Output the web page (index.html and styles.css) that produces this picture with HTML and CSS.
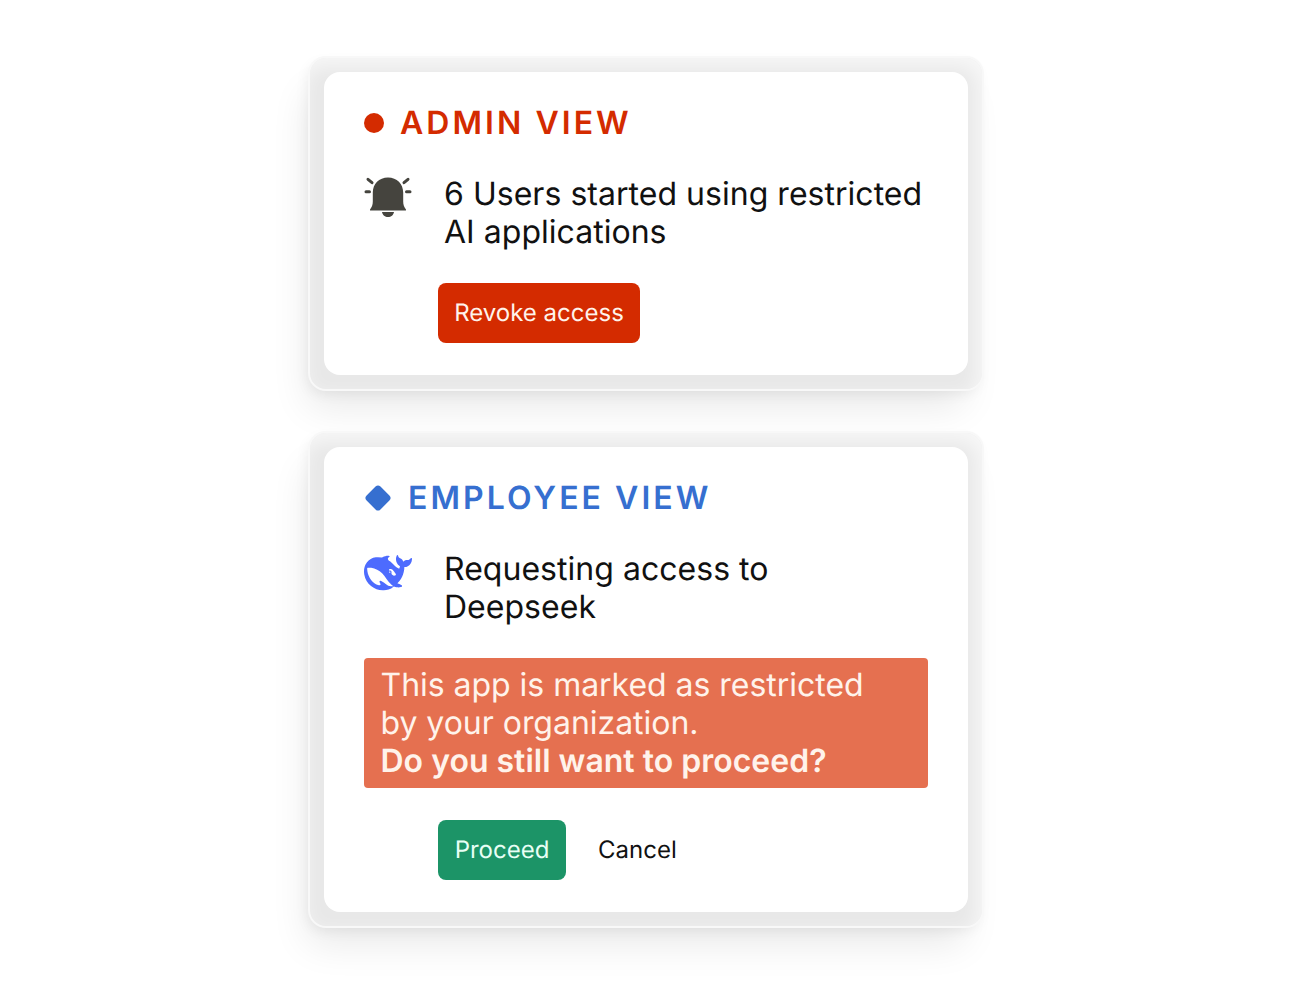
FILE: index.html
```
<!DOCTYPE html>
<html lang="en">
<head>
  <meta charset="UTF-8" />
  <meta name="viewport" content="width=device-width, initial-scale=1.0"/>
  <title>Restricted AI applications</title>
  <link rel="stylesheet" href="styles.css">
</head>
<body>

  <main class="container">

    <section class="frame">
      <div class="card">
        <h2 class="title admin"><span class="dot"></span>ADMIN VIEW</h2>
        <div class="message">
          <svg class="icon" viewBox="0 0 48 48" fill="#45443e">
            <path d="M24 3.500c9 0 15.200 6.500 15.200 15v9c0 3.500.9 5.500 2.600 7.800.6.900.2 1.200-.5 1.200H6.700c-.7 0-1.100-.3-.5-1.200 1.700-2.300 2.600-4.300 2.600-7.800v-9C8.800 10 15 3.500 24 3.500z"/>
            <path d="M18 38h12c-.5 3-3 5-6 5s-5.500-2-6-5z"/>
            <path d="M2 17.800h3.500M42.500 17.800H46M4 5.300l4 3.400M44 5.300l-4 3.400" fill="none" stroke="#45443e" stroke-width="3" stroke-linecap="round"/>
          </svg>
          <p>6 Users started using restricted<br/>AI applications</p>
        </div>
        <div class="actions">
          <button class="revoke">Revoke access</button>
        </div>
      </div>
    </section>

    <section class="frame">
      <div class="card">
        <h2 class="title employee">
          <svg class="diamond" viewBox="0 0 28 28"><rect x="4.200" y="4.200" width="19.600" height="19.600" rx="3.500" transform="rotate(45 14 14)" fill="#366fd0"/></svg>EMPLOYEE VIEW</h2>
        <div class="message">
          <svg class="icon whale" viewBox="0 0 24 24" fill="#4d6bfe">
            <path d="M23.748 4.482c-.254-.124-.364.113-.512.234-.051.039-.094.09-.137.136-.372.397-.806.657-1.373.626-.829-.046-1.537.214-2.163.848-.133-.782-.575-1.248-1.247-1.548-.352-.156-.708-.311-.955-.65-.172-.241-.219-.51-.305-.774-.055-.16-.11-.323-.293-.35-.2-.031-.278.136-.356.276-.313.572-.434 1.202-.422 1.84.027 1.436.633 2.58 1.838 3.393.137.093.172.187.129.323-.082.28-.18.552-.266.833-.055.179-.137.217-.329.14a5.526 5.526 0 01-1.736-1.18c-.857-.828-1.631-1.742-2.597-2.458a11.365 11.365 0 00-.689-.471c-.985-.957.13-1.743.388-1.836.27-.098.093-.432-.779-.428-.872.004-1.67.295-2.687.684a3.055 3.055 0 01-.465.137 9.597 9.597 0 00-2.883-.102c-1.885.21-3.39 1.102-4.497 2.623C.082 8.606-.231 10.684.152 12.85c.403 2.284 1.569 4.175 3.36 5.653 1.858 1.533 3.997 2.284 6.438 2.14 1.482-.085 3.133-.284 4.994-1.86.47.234.962.327 1.78.397.63.059 1.236-.03 1.705-.128.735-.156.684-.837.419-.961-2.155-1.004-1.682-.595-2.113-.926 1.096-1.296 2.746-2.642 3.392-7.003.05-.347.007-.565 0-.845-.004-.17.035-.237.23-.256a4.173 4.173 0 001.545-.475c1.396-.763 1.96-2.015 2.093-3.517.02-.23-.004-.467-.247-.588zM11.581 18c-2.089-1.642-3.102-2.183-3.52-2.16-.392.024-.321.471-.235.763.09.288.207.486.371.739.114.167.192.416-.113.603-.673.416-1.842-.14-1.897-.167-1.361-.802-2.5-1.86-3.301-3.307-.774-1.393-1.224-2.887-1.298-4.482-.02-.386.093-.522.477-.592a4.696 4.696 0 011.529-.039c2.132.312 3.946 1.265 5.468 2.774.868.86 1.525 1.887 2.202 2.891.72 1.066 1.494 2.082 2.48 2.914.348.292.625.514.891.677-.802.09-2.14.11-3.054-.614zm1-6.44a.306.306 0 01.415-.287.302.302 0 01.2.288.306.306 0 01-.31.307.303.303 0 01-.304-.308zm3.11 1.596c-.2.081-.399.151-.59.16a1.245 1.245 0 01-.798-.254c-.274-.23-.47-.358-.552-.758a1.73 1.73 0 01.016-.588c.07-.327-.008-.537-.239-.727-.187-.156-.426-.199-.688-.199a.559.559 0 01-.254-.078c-.11-.054-.2-.19-.114-.358.028-.054.16-.186.192-.21.356-.202.767-.136 1.146.016.352.144.618.408 1.001.782.391.451.462.576.685.914.176.265.336.537.445.848.067.195-.019.354-.25.452z"/>
          </svg>
          <p>Requesting access to<br/>Deepseek</p>
        </div>
        <div class="warning">
          This app is marked as restricted<br/>by your organization.<br/>
          <strong>Do you still want to proceed?</strong>
        </div>
        <div class="actions">
          <button class="proceed">Proceed</button>
          <button class="cancel">Cancel</button>
        </div>
      </div>
    </section>

  </main>

</body>
</html>
```
FILE: styles.css
```
* {
  box-sizing: border-box;
}

body {
  font-family: Inter, sans-serif;
  margin: 0;
  background: white;
  color: #111;
  text-rendering: geometricPrecision;
}

.container {
  width: 676px;
  min-height: 986px;
  margin-left: 308px;
  padding-top: 56px;
  display: flex;
  flex-direction: column;
  gap: 40px;
}

.frame {
  padding: 14px;
  border: 2px solid rgba(255,255,255,0.7);
  border-radius: 18px;
  background: #e8e8e8;
  box-shadow: -10px 26px 38px -10px rgba(0,0,0,0.09), -3px 5px 14px -3px rgba(0,0,0,0.07), inset -5px 8px 20px rgba(255,255,255,0.7);
}

.card {
  background: white;
  border-radius: 16px;
  padding: 32px 40px;
}

.title {
  display: flex;
  align-items: center;
  margin: 0;
  font-size: 32px;
  font-weight: 600;
  line-height: 1.2;
  letter-spacing: 3.05px;
}

.admin {
  color: #d42b00;
}

.employee {
  color: #366fd0;
}

.dot {
  width: 20px;
  height: 20px;
  margin-right: 16px;
  border-radius: 50%;
  background: #d42b00;
}

.diamond {
  width: 28px;
  height: 28px;
  margin-right: 16px;
}

.message {
  display: flex;
  gap: 32px;
  margin-top: 32px;
}

.message p {
  margin: 0;
  padding-top: 0.8px;
  font-size: 32px;
  line-height: 38px;
  letter-spacing: 0.03px;
  white-space: nowrap;
}

.icon {
  width: 48px;
  height: 48px;
  flex-shrink: 0;
}

.whale {
  margin-top: -1px;
}

.warning {
  margin-top: 32px;
  padding: 8px 16.5px;
  height: 130px;
  border-radius: 4px;
  background: #e57050;
  color: #fff3eb;
  font-size: 32px;
  line-height: 38px;
  letter-spacing: -0.03px;
  white-space: nowrap;
}

.warning strong {
  font-weight: 600;
  letter-spacing: 0;
}

.actions {
  display: flex;
  gap: 16px;
  margin-top: 32px;
  padding-left: 74px;
}

button {
  height: 60px;
  padding: 0 16px 2px;
  border: none;
  border-radius: 8px;
  font-family: inherit;
  font-size: 24px;
  text-rendering: inherit;
  cursor: pointer;
}

.revoke {
  width: 202px;
  background: #d42b00;
  color: #fff3eb;
}

.proceed {
  width: 128px;
  background: #1c9467;
  color: #e8fff5;
}

.cancel {
  background: none;
  color: #111;
}
```
